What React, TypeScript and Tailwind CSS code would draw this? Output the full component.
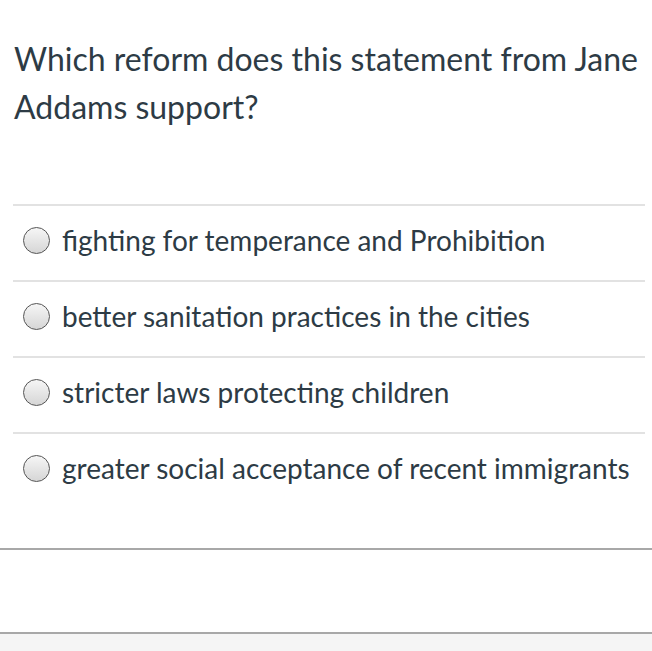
const OPTIONS = [
  "fighting for temperance and Prohibition",
  "better sanitation practices in the cities",
  "stricter laws protecting children",
  "greater social acceptance of recent immigrants",
];

function Radio() {
  return (
    <span className="w-[27px] h-[27px] shrink-0 rounded-full border-[1.5px] border-[#555] bg-gradient-to-b from-[#f6f6f6] to-[#d6d6d6]" />
  );
}

export default function App() {
  return (
    <div className="w-[652px] h-[651px] bg-white flex flex-col overflow-hidden text-[#2d3b45]" style={{ fontFamily: "Lato, 'Open Sans', sans-serif" }}>
      <div className="px-[14px] pt-[35px] pb-[73px] text-[32px] leading-[48px]">
        Which reform does this statement from Jane Addams support?
      </div>
      <div className="px-[13px] pr-[7px]">
        {OPTIONS.map((o) => (
          <div key={o} className="h-[76px] border-t-2 border-[#e2e2e2] flex items-center gap-[12px] pl-[10px] pb-[6px]">
            <Radio />
            <span className="text-[28px]">{o}</span>
          </div>
        ))}
      </div>
      <div className="h-[40px]" />
      <div className="border-t-2 border-[#a8a8a8] h-[84px]" />
      <div className="border-t-2 border-[#a8a8a8] flex-1 bg-[#f5f5f5]" />
    </div>
  );
}
